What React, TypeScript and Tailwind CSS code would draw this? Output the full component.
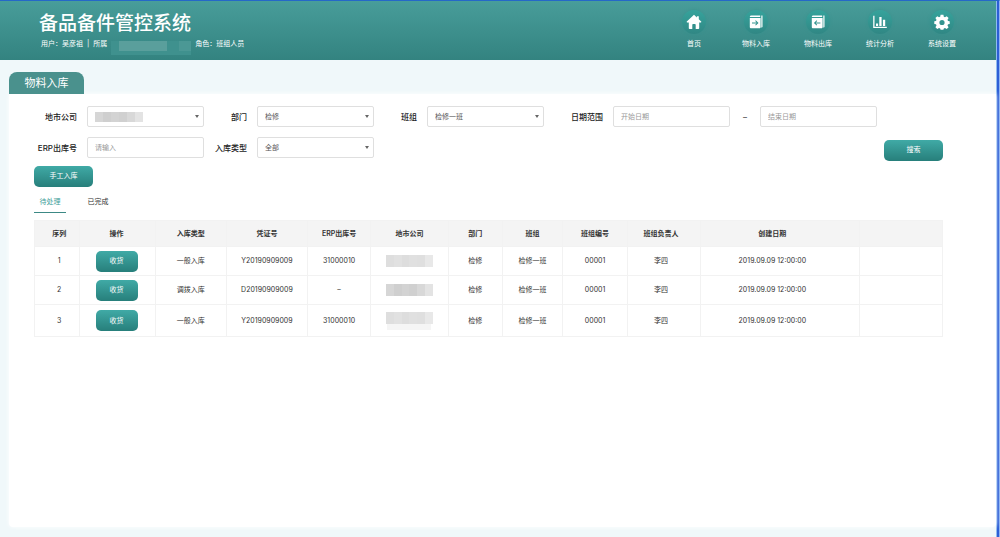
import React, { useState } from 'react';

const NavDisc = ({ children }: { children: React.ReactNode }) => (
  <span className="flex size-6 items-center justify-center rounded-full bg-linear-to-b from-[#36a39c] to-[#308784] shadow-[0_0_3px_#38938f]">
    <svg viewBox="0 0 16 16" className="size-4" fill="#fff" aria-hidden="true">{children}</svg>
  </span>
);

const nav = [
  { label: '首页', icon: <path d="M8 .8.8 7.6c-.3.4-.1.8.3.8h1.7v5.8c0 .5.3.8.8.8h2.700v-4.200c0-.5.3-.8.8-.8h1.800c.5 0 .8.3.8.8V15h2.700c.5 0 .8-.3.8-.8V8.400h1.700c.4 0 .6-.4.3-.8L12.800 5.200V2.200h-1.900v1.200z" /> },
  {
    label: '物料入库',
    icon: (
      <>
        <path d="M3.300 1.500h8.900v1.600H1.800c0-.9.600-1.600 1.500-1.600zM13.300 1.500h1.200v11c0 .6-.4 1-1.200 1z" />
        <path fillRule="evenodd" d="M1.800 4h10.800v8.900c0 .8-.5 1.300-1.300 1.300H3.100c-.8 0-1.300-.5-1.300-1.300zM4 8.500v.9h4.600l-1.400 1.400.6.700 2.700-2.600-2.700-2.600-.6.700 1.400 1.500z" />
      </>
    ),
  },
  {
    label: '物料出库',
    icon: (
      <>
        <path d="M3.300 1.500h8.900v1.600H1.800c0-.9.600-1.600 1.500-1.600zM13.300 1.500h1.200v11c0 .6-.4 1-1.200 1z" />
        <path fillRule="evenodd" d="M1.800 4h10.800v8.900c0 .8-.5 1.300-1.300 1.300H3.100c-.8 0-1.300-.5-1.300-1.300zM10.400 8.500v.9H5.800l1.400 1.400-.6.700-2.700-2.600 2.700-2.600.6.700-1.400 1.500z" />
      </>
    ),
  },
  { label: '统计分析', icon: <path d="M1.200 1.800h1.300v11h12.300V14H1.200zM4 9.600h2.100v2.300H4zM7.300 3h2.300v8.900H7.300zM10.900 5.700h2.300v6.200h-2.300z" /> },
  {
    label: '系统设置',
    icon: <path fillRule="evenodd" d="m6.600.8-.4 2-1.200.5-1.700-1.100-1.900 1.900 1.100 1.700-.5 1.200-1.700.3v2.600l1.700.4.5 1.200-1.100 1.700 1.900 1.900L5 14l1.200.5.4 1.300h2.800l.4-1.300L11 14l1.700 1.100 1.900-1.900-1.100-1.700.5-1.200 1.700-.4V7.300L14 7l-.5-1.200 1.100-1.700-1.900-1.900L11 3.300l-1.200-.5-.4-2zM8 5.900a2.600 2.600 0 1 1 0 5.200 2.600 2.600 0 0 1 0-5.200z" />,
  },
];

const field = 'block h-[21px] w-full appearance-none rounded-xs border border-[#dfdfdf] bg-white px-[7px] text-[7px] leading-4 text-[#555] outline-none placeholder:text-[#999] focus:border-[#3c9792]';
const label = 'text-right text-[8px] leading-4 font-medium whitespace-nowrap text-[#222]';
const button = 'rounded-[5px] bg-linear-to-b from-[#40aaa6] to-[#277f7b] text-[7px] text-white hover:brightness-105';

function Select({ id, value }: { id: string; value: string }) {
  return (
    <div className="relative">
      <select id={id} className={field}>
        <option>{value}</option>
      </select>
      {value === '' && <Mosaic className="absolute top-1.5 left-2 h-2.5 w-12" tone="dark" />}
      <svg viewBox="0 0 4 3" className="pointer-events-none absolute top-[9px] right-[5px] h-[3px] w-1" aria-hidden="true">
        <path d="M0 0h4L2 3z" fill="#666" />
      </svg>
    </div>
  );
}

function Mosaic({ className, tone }: { className: string; tone: 'dark' | 'light' }) {
  const shades = tone === 'dark'
    ? ['bg-[#d6d6d6]', 'bg-[#cfcfcf]', 'bg-[#d3d3d3]', 'bg-[#d0d0d0]', 'bg-[#d8d8d8]', 'bg-[#e3e3e3]']
    : ['bg-[#dedede]', 'bg-[#e1e1e1]', 'bg-[#dddddd]', 'bg-[#e0e0e0]', 'bg-[#dfdfdf]', 'bg-[#e8e8e8]'];
  return (
    <span className={`flex ${className}`}>
      {shades.map((s) => <span key={s} className={`flex-1 ${s}`} />)}
    </span>
  );
}

const columns = [
  ['序列', 'w-[5%]'], ['操作', 'w-[8.3%]'], ['入库类型', 'w-[7.8%]'], ['凭证号', 'w-[9%]'],
  ['ERP出库号', 'w-[6.9%]'], ['地市公司', 'w-[8.6%]'], ['部门', 'w-[5.9%]'], ['班组', 'w-[6.7%]'],
  ['班组编号', 'w-[7.1%]'], ['班组负责人', 'w-[8.1%]'], ['创建日期', 'w-[17.5%]'], ['', 'w-[9.1%]'],
];

const rows = [
  { type: '一般入库', voucher: 'Y20190909009', erp: '31000010', tone: 'light' as const, height: 'h-[29px]' },
  { type: '调拨入库', voucher: 'D20190909009', erp: '–', tone: 'dark' as const, height: 'h-[29px]' },
  { type: '一般入库', voucher: 'Y20190909009', erp: '31000010', tone: 'light' as const, height: 'h-8' },
];

const rowStyle = '*:border *:border-[#f2f2f2] *:py-0 *:pr-0 *:pl-0 *:whitespace-nowrap *:first:pl-1 *:nth-2:pr-0.5 *:nth-10:pr-1.5 *:nth-11:pr-4';

export default function App() {
  const [tab, setTab] = useState('待处理');
  return (
    <div className="border-t border-r border-t-[#2568c8] border-r-[#8fb4f2]">
      <div className="border-r-2 border-[#2d5fd6]">
        <div className="flex min-h-[calc(100vh-1px)] flex-col border-r border-[#8fbcf0] bg-[#f0f8fa] font-[Inter,'Noto_Sans_CJK_SC',sans-serif] text-[#333]">
          <header className="flex h-[59px] justify-between bg-linear-to-b from-[#489d9a] to-[#338380] pr-[23px] pl-[39px] text-white">
            <div className="pt-[9px]">
              <h1 className="text-[19px] leading-7 font-medium">备品备件管控系统</h1>
              <div className="flex h-3 items-center gap-1 pl-0.5 text-[7px] leading-3 whitespace-nowrap">
                <span>用户：吴彦祖</span>
                <span>|</span>
                <span>所属</span>
                <span className="mt-2 flex h-3.5 w-20 items-start bg-[#3f918e] pl-2">
                  <span className="h-2.5 w-12 bg-[#5a9f9c]" />
                  <span className="ml-3 h-2.5 flex-1 bg-[#4b9895]" />
                </span>
                <span>角色：班组人员</span>
              </div>
            </div>
            <nav className="flex pt-[9px]">
              {nav.map((n) => (
                <a key={n.label} href="#" className="flex w-[62px] flex-col items-center gap-1 text-[7px] leading-3">
                  <NavDisc>{n.icon}</NavDisc>
                  {n.label}
                </a>
              ))}
            </nav>
          </header>

          <main className="flex flex-1 flex-col pt-3 pb-2.5 pl-[9px]">
            <h2 className="z-10 flex h-[22px] w-[75px] items-center justify-center rounded-t-lg bg-[#4a918d] text-[11px] leading-4 text-white">物料入库</h2>
            <section className="flex-1 rounded-b-sm bg-white pt-3 pr-[53px] pl-[25px] shadow-[0_0_4px_#fff]">
              <form onSubmit={(e) => e.preventDefault()}>
                <div className="grid grid-cols-[43px_117px_33px_117px_33px_117px_49px_117px_10px_117px] items-center gap-2.5">
                  <label htmlFor="city" className={label}>地市公司</label>
                  <Select id="city" value="" />
                  <label htmlFor="dept" className={label}>部门</label>
                  <Select id="dept" value="检修" />
                  <label htmlFor="team" className={label}>班组</label>
                  <Select id="team" value="检修一班" />
                  <label htmlFor="start" className={label}>日期范围</label>
                  <input id="start" className={field} placeholder="开始日期" />
                  <label htmlFor="end" aria-label="结束日期" className="text-center text-[8px] leading-4">–</label>
                  <input id="end" className={field} placeholder="结束日期" />
                  <label htmlFor="erp" className={label}>ERP出库号</label>
                  <input id="erp" className={field} placeholder="请输入" />
                  <label htmlFor="kind" className={label}>入库类型</label>
                  <Select id="kind" value="全部" />
                </div>
                <div className="-mt-[18px] flex justify-end">
                  <button className={`${button} h-[21px] w-[59px]`}>搜索</button>
                </div>
              </form>
              <button className={`${button} mt-[5px] block h-[21px] w-[59px]`}>手工入库</button>

              <div role="tablist" className="mt-1 flex gap-4 text-[7px]">
                {['待处理', '已完成'].map((t) => (
                  <button
                    key={t}
                    role="tab"
                    aria-selected={tab === t}
                    onClick={() => setTab(t)}
                    className={`h-[22px] w-8 border-b pt-0.5 ${tab === t ? 'border-[#3c8985] text-[#43a09a]' : 'border-transparent'}`}
                  >
                    {t}
                  </button>
                ))}
              </div>

              <table className="mt-[7px] w-full table-fixed border-collapse text-center text-[7px] leading-3">
                <thead>
                  <tr className={`h-[26px] bg-[#f4f4f4] ${rowStyle}`}>
                    {columns.map(([name, width]) => (
                      <th key={name} className={`${width} font-semibold`}>{name}</th>
                    ))}
                  </tr>
                </thead>
                <tbody>
                  {rows.map((r, i) => (
                    <tr key={i} className={`${r.height} ${rowStyle}`}>
                      <td>{i + 1}</td>
                      <td><button className={`${button} mx-auto block h-[21px] w-[42px]`}>收货</button></td>
                      <td>{r.type}</td>
                      <td>{r.voucher}</td>
                      <td>{r.erp}</td>
                      <td>
                        <Mosaic className="mx-auto h-3 w-[47px]" tone={r.tone} />
                        {i === 2 && <span className="mx-auto block h-1.5 w-[44px] bg-[#f5f5f5]" />}
                      </td>
                      <td>检修</td>
                      <td>检修一班</td>
                      <td>00001</td>
                      <td>李四</td>
                      <td>2019.09.09 12:00:00</td>
                      <td />
                    </tr>
                  ))}
                </tbody>
              </table>
            </section>
          </main>
        </div>
      </div>
    </div>
  );
}
